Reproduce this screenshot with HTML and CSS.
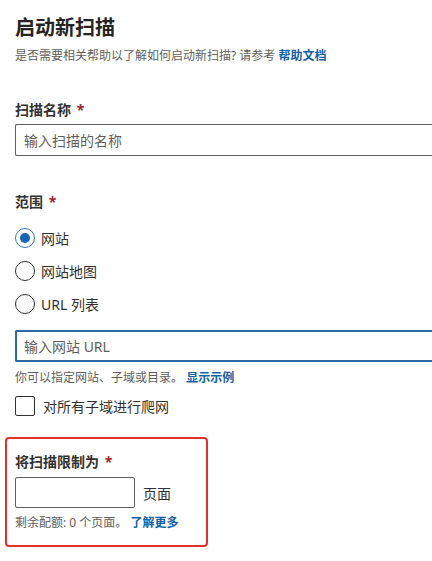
FILE: index.html
```html
<!DOCTYPE html>
<html lang="zh-CN">
<head>
<meta charset="utf-8">
<link rel="stylesheet" href="styles.css">
</head>
<body>
<div class="page">
  <h1 class="title">启动新扫描</h1>
  <p class="subtitle">是否需要相关帮助以了解如何启动新扫描? 请参考 <a class="link">帮助文档</a></p>

  <div class="field name-field">
    <label class="label">扫描名称 <span class="req">*</span></label>
    <div class="input wide"><span class="placeholder">输入扫描的名称</span></div>
  </div>

  <div class="field scope-field">
    <label class="label">范围 <span class="req">*</span></label>
    <div class="radios">
      <div class="radio-row"><span class="radio checked"></span><span class="radio-text">网站</span></div>
      <div class="radio-row"><span class="radio"></span><span class="radio-text">网站地图</span></div>
      <div class="radio-row"><span class="radio"></span><span class="radio-text">URL 列表</span></div>
    </div>
    <div class="input wide focused"><span class="placeholder">输入网站 URL</span></div>
    <p class="help">你可以指定网站、子域或目录。 <a class="link">显示示例</a></p>
    <div class="check-row"><span class="checkbox"></span><span class="check-text">对所有子域进行爬网</span></div>
  </div>

  <div class="limit-box">
    <label class="label">将扫描限制为 <span class="req">*</span></label>
    <div class="limit-row">
      <div class="input small"></div>
      <span class="unit">页面</span>
    </div>
    <p class="help">剩余配额: 0 个页面。 <a class="link">了解更多</a></p>
  </div>
</div>
</body>
</html>
```

FILE: styles.css
```css
html, body {
  margin: 0;
  padding: 0;
  background: #ffffff;
  overflow: hidden;
}

body {
  font-family: "Noto Sans", "Noto Sans CJK SC", sans-serif;
  color: #323130;
}

.page {
  padding: 14px 0 0 15px;
}

.title {
  margin: 0;
  font-size: 20px;
  line-height: 28px;
  font-weight: 700;
  color: #252423;
}

.subtitle {
  margin: 6px 0 0;
  font-size: 12px;
  line-height: 16px;
  color: #605e5c;
}

.link {
  color: #1260a8;
  font-weight: 700;
  text-decoration: none;
}

.field {
  display: flex;
  flex-direction: column;
}

.name-field {
  margin-top: 36px;
}

.scope-field {
  margin-top: 36px;
}

.label {
  display: block;
  font-size: 14px;
  line-height: 20px;
  font-weight: 700;
  color: #323130;
}

.req {
  color: #a4262c;
  margin-left: 2px;
}

.input {
  box-sizing: border-box;
  height: 32px;
  border: 1px solid #605e5c;
  border-radius: 2px;
  background: #fff;
  display: flex;
  align-items: center;
  padding-left: 8px;
}

.input.wide {
  width: 417px;
  margin-top: 4px;
  border-right-width: 0;
  border-top-right-radius: 0;
  border-bottom-right-radius: 0;
}

.input.focused {
  border: 2px solid #2a6aa0;
  border-right-width: 0;
  padding-left: 7px;
  margin-top: 16px;
}

.placeholder {
  font-size: 14px;
  color: #605e5c;
}

.radios {
  margin-top: 16px;
  display: flex;
  flex-direction: column;
  gap: 13px;
}

.radio-row {
  display: flex;
  align-items: center;
  height: 20px;
}

.radio {
  box-sizing: border-box;
  width: 20px;
  height: 20px;
  border: 1px solid #323130;
  border-radius: 50%;
  display: flex;
  align-items: center;
  justify-content: center;
}

.radio.checked {
  border-color: #3a77b0;
}

.radio.checked::after {
  content: "";
  width: 10px;
  height: 10px;
  border-radius: 50%;
  background: #1565b8;
}

.radio-text {
  margin-left: 6px;
  font-size: 14px;
  color: #323130;
}

.help {
  margin: 8px 0 0;
  font-size: 12px;
  line-height: 16px;
  color: #605e5c;
}

.check-row {
  margin-top: 10px;
  display: flex;
  align-items: center;
  height: 20px;
}

.checkbox {
  box-sizing: border-box;
  width: 20px;
  height: 20px;
  border: 1px solid #323130;
  border-radius: 2px;
}

.check-text {
  margin-left: 8px;
  font-size: 14px;
  color: #323130;
}

.limit-box {
  box-sizing: border-box;
  width: 203px;
  margin: 21px 0 0 -10px;
  padding: 13px 8px 14px 8px;
  border: 2px solid #e2312b;
  border-radius: 4px;
}

.limit-row {
  margin-top: 5px;
  display: flex;
  align-items: center;
  gap: 8px;
}

.input.small {
  width: 120px;
  height: 31px;
}

.unit {
  font-size: 14px;
  color: #323130;
}

.limit-box .help {
  margin-top: 7px;
}
```
